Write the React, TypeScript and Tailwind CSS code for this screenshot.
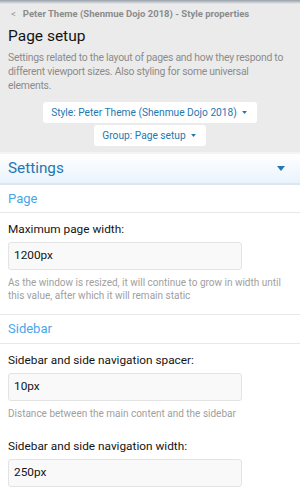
import React from "react";

function Caret({ className = "" }: { className?: string }) {
  return (
    <svg viewBox="0 0 8 5" className={className}>
      <path d="M0 0 L8 0 L4 5 Z" fill="currentColor" />
    </svg>
  );
}

function Field({
  label,
  value,
  help,
  pb,
}: {
  label: string;
  value: string;
  help?: string;
  pb: string;
}) {
  return (
    <div className={`px-2 pt-[9px] ${pb}`}>
      <div className="text-[11.8px] text-[#141414] leading-[14px] mb-[6px]">{label}</div>
      <div className="w-[234px] h-[28px] rounded-[3px] border border-[#e3e3e3] bg-[#f9f9f9] flex items-center px-[5px] text-[11.8px] text-[#141414]">
        {value}
      </div>
      {help && (
        <div className="text-[10px] text-[#a0a0a0] leading-[13px] mt-[6px] pr-1">{help}</div>
      )}
    </div>
  );
}

export default function App() {
  return (
    <div
      className="w-[300px] h-[492px] overflow-hidden bg-white"
      style={{ fontFamily: "Roboto, 'Noto Sans', sans-serif" }}
    >
      <div className="bg-[#ebebeb] relative h-[152px]">
        <div className="absolute top-0 left-0 right-0 h-[4px] bg-gradient-to-b from-[#97a0aa] to-[#ebebeb]" />
        <div className="pt-[8px] px-2">
          <div className="flex items-center text-[9.5px] font-bold text-[#8c8c8c] leading-[12px]">
            <span className="mr-[7px] ml-[3px] font-normal text-[#9a9a9a]">&lt;</span>
            <span>Peter Theme (Shenmue Dojo 2018) - Style properties</span>
          </div>
          <div className="text-[15.5px] text-[#141414] leading-[20px] mt-[6px]">Page setup</div>
          <div className="w-[278px] text-[10.4px] tracking-[-0.25px] text-[#8c8c8c] leading-[14px] mt-[5px]">
            Settings related to the layout of pages and how they respond to different viewport sizes. Also styling for some universal elements.
          </div>
        </div>
        <div className="flex flex-col items-center gap-[2px] pt-[9px]">
          <div className="h-[21px] pl-[8px] pr-[10px] bg-white rounded-[3px] flex items-center text-[10.2px] text-[#2577b1] gap-[5px]">
            Style: Peter Theme (Shenmue Dojo 2018)
            <Caret className="w-[5px] h-[3px]" />
          </div>
          <div className="h-[21px] pl-[8px] pr-[10px] bg-white rounded-[3px] flex items-center text-[10.2px] text-[#2577b1] gap-[5px]">
            Group: Page setup
            <Caret className="w-[5px] h-[3px]" />
          </div>
        </div>
      </div>
      <div className="h-[2px] bg-[#f4f4f4]" />
      <div className="h-[31px] border-b-[2px] border-[#dfe5ec] bg-gradient-to-b from-white to-[#e9f3fd] flex items-center justify-between px-2">
        <span className="text-[15.3px] text-[#2577b1]">Settings</span>
        <Caret className="text-[#2577b1] mr-[7px] w-[8px] h-[5px]" />
      </div>
      <div className="h-[28px] border-b border-[#e8e8e8] flex items-center px-2 text-[13px] text-[#47a7eb]">
        Page
      </div>
      <Field
        label="Maximum page width:"
        value="1200px"
        help="As the window is resized, it will continue to grow in width until this value, after which it will remain static"
        pb="pb-[12px]"
      />
      <div className="h-[30px] border-t border-b border-[#e8e8e8] flex items-center px-2 text-[13px] text-[#47a7eb]">
        Sidebar
      </div>
      <Field
        label="Sidebar and side navigation spacer:"
        value="10px"
        help="Distance between the main content and the sidebar"
        pb="pb-[10px]"
      />
      <Field label="Sidebar and side navigation width:" value="250px" pb="pb-[10px]" />
    </div>
  );
}
